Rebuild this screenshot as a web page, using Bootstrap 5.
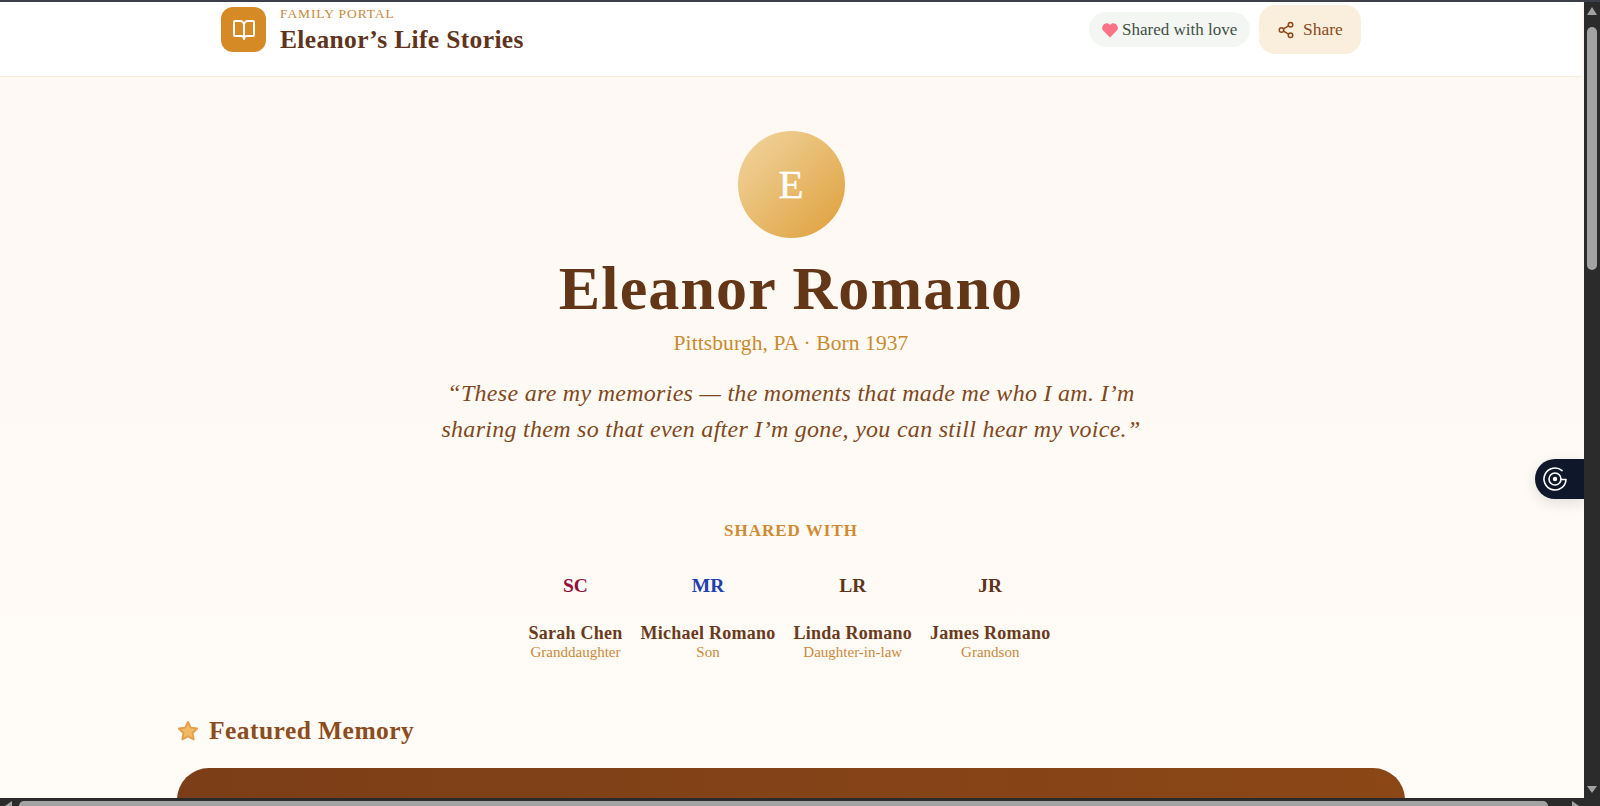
<!DOCTYPE html>
<html lang="en">
<head>
<meta charset="utf-8">
<title>Eleanor's Life Stories</title>
<link href="https://cdn.jsdelivr.net/npm/bootstrap@5.3.0/dist/css/bootstrap.min.css" rel="stylesheet">
<style>
html,body{height:100%;overflow:hidden;margin:0}
body{font-family:"Liberation Serif",Georgia,serif;background:#2b2b2b}
.shell{display:grid;grid-template-columns:1fr 16px;grid-template-rows:2px 1fr 8px;height:806px;width:1600px}
.topline{grid-column:1/3;background:#3c3f4a}
.viewport{position:relative;overflow:hidden;background:linear-gradient(180deg,#fdf8f2 0,#fffbf6 100%)}
.page{width:1582px}
.vbar,.hbar{background:#2b2b2b;position:relative}
.vbar{display:flex;flex-direction:column;align-items:center}
.v-up{width:0;height:0;border-left:5px solid transparent;border-right:5px solid transparent;border-bottom:8px solid #a3a3a3;margin-top:5px}
.v-thumb{width:10px;height:243px;background:#a3a3a3;border-radius:5px;margin-top:12px}
.v-down{width:0;height:0;border-left:5px solid transparent;border-right:5px solid transparent;border-top:7px solid #a3a3a3;margin-top:auto;margin-bottom:5px}
.hbar{grid-column:1/3;display:flex;align-items:flex-start;padding-top:3px}
.h-left{width:0;height:0;border-top:5px solid transparent;border-bottom:5px solid transparent;border-right:7px solid #a3a3a3;margin-left:5px}
.h-thumb{height:10px;width:1529px;margin-left:7px;background:#a3a3a3;border-radius:5px}
.h-right{width:0;height:0;border-top:5px solid transparent;border-bottom:5px solid transparent;border-left:7px solid #a3a3a3;margin-left:24px}
.topbar{height:75px;background:#fff;border-bottom:1px solid #f8ecdc}
.topbar-inner{width:1140px;margin:0 auto;height:52px;padding-top:3px;box-sizing:content-box}
.logo-box{width:45px;height:45px;border-radius:12px;background:#d58a26;margin-top:2px}
.brand{gap:14px}
.brand-copy{padding-top:2px}
.eyebrow{font-size:13.5px;letter-spacing:.9px;color:#c98a3c;line-height:14px}
.site-name{font-size:25.5px;font-weight:700;color:#5f341c;line-height:30px;letter-spacing:.35px;margin-top:4px}
.actions{gap:9px}
.love-pill{height:35px;width:161px;border-radius:18px;background:#f4f6f4;color:#3f5045;font-size:17px;gap:3px;padding-left:12px;margin-top:7px}
.share-btn{height:49px;width:102px;border-radius:16px;background:#faefdc;color:#8b4a1c;font-size:17.5px;border:0;gap:8px;padding:0 0 0 18px}
.hero{padding-top:54px}
.avatar{width:107px;height:107px;border-radius:50%;background:linear-gradient(135deg,#f1d6a2,#df9f3a);color:#fff;font-size:41px;line-height:107px;font-weight:500;-webkit-text-stroke:.4px #fff}
.person{font-size:62px;font-weight:700;color:#643618;line-height:72px;margin:14px 0 0;letter-spacing:1.15px}
.place{font-size:21.5px;color:#c98a2e;line-height:30px;margin-top:4px;letter-spacing:.1px}
.quote{font-size:24px;font-style:italic;color:#80481c;line-height:36px;width:720px;margin:17px auto 0;letter-spacing:.28px}
.shared-label{font-size:17px;font-weight:700;color:#cf8a30;letter-spacing:1px;line-height:20px;margin-top:74px}
.members{gap:18px;margin-top:33px;padding-right:3px}
.initials{font-size:19.5px;font-weight:700;line-height:24px}
.who{font-size:18px;font-weight:700;color:#6a3a1c;line-height:22px;margin-top:24px;letter-spacing:.25px}
.rel{font-size:15px;color:#c98a3c;line-height:18px;margin-top:-1px}
.feature-row{width:1228px;margin:55px auto 0;gap:10px}
.feature-title{font-size:25.5px;font-weight:700;color:#8b4c1e;line-height:30px;margin:0;letter-spacing:.45px}
.feature-card{width:1228px;height:120px;margin:22px auto 0;border-radius:32px;background:linear-gradient(90deg,#7c3e18,#8b4716)}
.float-tab{position:absolute;right:0;top:457px;width:49px;height:40px;padding-left:6px;background:#0f172a;border-radius:20px 0 0 20px;box-shadow:0 4px 14px rgba(15,23,42,.12)}
</style>
</head>
<body>
<div class="shell">
  <div class="topline"></div>
  <div class="viewport">
    <div class="page">
    <header class="topbar">
      <div class="topbar-inner d-flex justify-content-between align-items-start">
        <div class="brand d-flex align-items-start">
          <div class="logo-box d-flex align-items-center justify-content-center">
            <svg width="24" height="24" viewBox="0 0 24 24" fill="none" stroke="#fff" stroke-width="2" stroke-linecap="round" stroke-linejoin="round"><path d="M12 7v14"/><path d="M3 18a1 1 0 0 1-1-1V4a1 1 0 0 1 1-1h5a4 4 0 0 1 4 4 4 4 0 0 1 4-4h5a1 1 0 0 1 1 1v13a1 1 0 0 1-1 1h-6a3 3 0 0 0-3 3 3 3 0 0 0-3-3z"/></svg>
          </div>
          <div class="brand-copy">
            <div class="eyebrow text-uppercase">Family Portal</div>
            <div class="site-name">Eleanor’s Life Stories</div>
          </div>
        </div>
        <div class="actions d-flex align-items-start">
          <div class="love-pill d-flex align-items-center">
            <svg width="18" height="18" viewBox="0 0 24 24" fill="#fb7185"><path d="M12 22 3.200 13.100A6 6 0 0 1 7.500 3c2 0 3.400 .8 4.500 2.300C13.100 3.800 14.500 3 16.500 3a6 6 0 0 1 4.300 10.100z"/></svg>
            <span>Shared with love</span>
          </div>
          <button class="share-btn d-flex align-items-center" type="button">
            <svg width="18" height="18" viewBox="0 0 24 24" fill="none" stroke="#8b4a1c" stroke-width="2" stroke-linecap="round" stroke-linejoin="round"><circle cx="18" cy="5" r="3"/><circle cx="6" cy="12" r="3"/><circle cx="18" cy="19" r="3"/><path d="m8.590 13.510 6.830 3.980"/><path d="m15.410 6.510-6.820 3.980"/></svg>
            <span>Share</span>
          </button>
        </div>
      </div>
    </header>
    <main class="hero text-center">
      <div class="avatar mx-auto">E</div>
      <h1 class="person">Eleanor Romano</h1>
      <div class="place">Pittsburgh, PA · Born 1937</div>
      <p class="quote">“These are my memories — the moments that made me who I am. I’m sharing them so that even after I’m gone, you can still hear my voice.”</p>
      <div class="shared-label text-uppercase">Shared with</div>
      <div class="members d-flex justify-content-center">
        <div><div class="initials" style="color:#8f1239">SC</div><div class="who">Sarah Chen</div><div class="rel">Granddaughter</div></div>
        <div><div class="initials" style="color:#1e40af">MR</div><div class="who">Michael Romano</div><div class="rel">Son</div></div>
        <div><div class="initials" style="color:#5f341c">LR</div><div class="who">Linda Romano</div><div class="rel">Daughter-in-law</div></div>
        <div><div class="initials" style="color:#5f341c">JR</div><div class="who">James Romano</div><div class="rel">Grandson</div></div>
      </div>
      <div class="feature-row d-flex align-items-center">
        <svg width="22" height="22" viewBox="0 0 24 24" fill="#f2b866" stroke="#e3a04a" stroke-width="2" stroke-linejoin="round"><path d="m12 2 3.100 6.300 6.900 1-5 4.900 1.200 6.900-6.200-3.300-6.200 3.300 1.200-6.900-5-4.900 6.900-1z"/></svg>
        <h2 class="feature-title">Featured Memory</h2>
      </div>
      <div class="feature-card"></div>
    </main>
    </div>
    <div class="float-tab d-flex align-items-center">
      <svg width="28" height="28" viewBox="0 0 28 28" fill="none" stroke="#fff" stroke-width="1.600" stroke-linecap="round" stroke-linejoin="round"><path d="M21.100 5.600A11 11 0 1 0 25 14.500H20"/><circle cx="14" cy="14" r="6"/><circle cx="14" cy="14" r="2.200" fill="#fff" stroke="none"/></svg>
    </div>
  </div>
  <div class="vbar"><div class="v-up"></div><div class="v-thumb"></div><div class="v-down"></div></div>
  <div class="hbar"><div class="h-left"></div><div class="h-thumb"></div><div class="h-right"></div></div>
</div>
<script src="https://cdn.jsdelivr.net/npm/bootstrap@5.3.0/dist/js/bootstrap.bundle.min.js"></script>
</body>
</html>
